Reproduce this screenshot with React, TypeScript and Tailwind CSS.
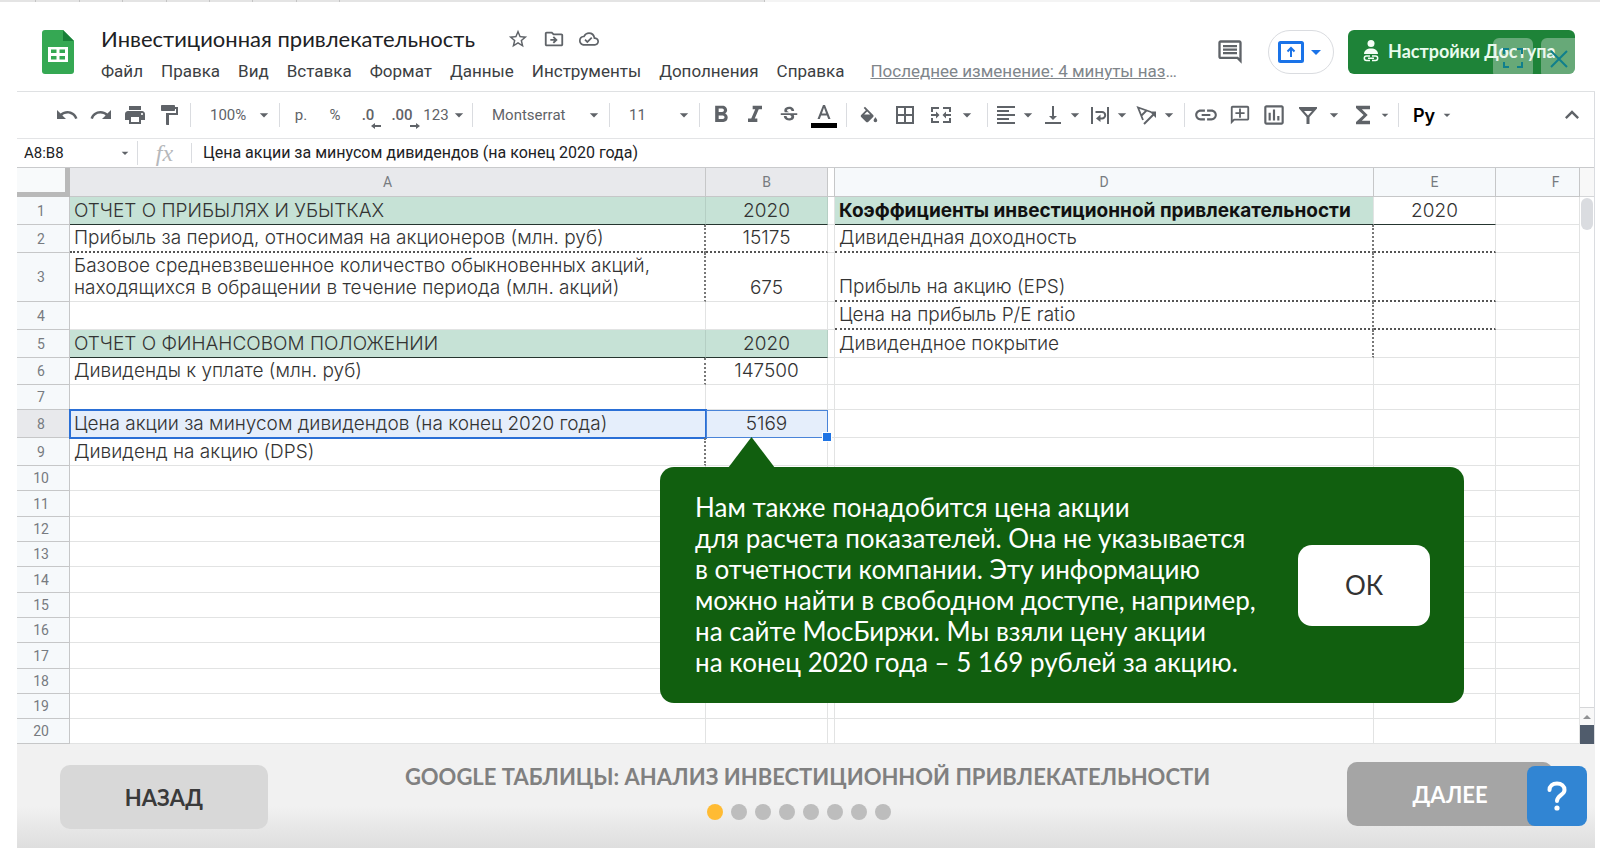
import type { ReactNode } from "react";
import clsx from "clsx";
import {
  MdArrowDropDown,
  MdBorderAll,
  MdFormatAlignLeft,
  MdFormatBold,
  MdFormatItalic,
  MdFunctions,
  MdInsertLink,
  MdKeyboardArrowUp,
  MdOutlineAddComment,
  MdOutlineCloudDone,
  MdOutlineComment,
  MdOutlineDriveFileMove,
  MdOutlineInsertChart,
  MdPrint,
  MdRedo,
  MdStarBorder,
  MdStrikethroughS,
  MdUndo,
  MdVerticalAlignBottom,
} from "react-icons/md";

const TAB_WIDTHS = [36, 44, 43, 44, 43, 43, 44, 43, 425];

const MENU = [
  "Файл",
  "Правка",
  "Вид",
  "Вставка",
  "Формат",
  "Данные",
  "Инструменты",
  "Дополнения",
  "Справка",
];

type CellStyle = "head" | "bold" | "line" | "dot" | "plain";

type Cell = { text?: string; style?: CellStyle; dotRight?: boolean };

type Row = {
  height: string;
  a?: Cell;
  b?: Cell;
  d?: Cell;
  e?: Cell;
};

const ROWS: Row[] = [
  {
    height: "h-[28px]",
    a: { text: "ОТЧЕТ О ПРИБЫЛЯХ И УБЫТКАХ", style: "head" },
    b: { text: "2020", style: "head" },
    d: { text: "Коэффициенты инвестиционной привлекательности", style: "bold" },
    e: { text: "2020", style: "line" },
  },
  {
    height: "h-[28px]",
    a: {
      text: "Прибыль за период, относимая на акционеров (млн. руб)",
      style: "dot",
      dotRight: true,
    },
    b: { text: "15175", style: "dot" },
    d: { text: "Дивидендная доходность", style: "dot", dotRight: true },
    e: { style: "dot" },
  },
  {
    height: "h-[49px]",
    a: {
      text: "Базовое средневзвешенное количество обыкновенных акций, находящихся в обращении в течение периода (млн. акций)",
      dotRight: true,
    },
    b: { text: "675" },
    d: { text: "Прибыль на акцию (EPS)", style: "dot", dotRight: true },
    e: { style: "dot" },
  },
  {
    height: "h-[28px]",
    d: { text: "Цена на прибыль P/E ratio", style: "dot", dotRight: true },
    e: { style: "dot" },
  },
  {
    height: "h-[28px]",
    a: { text: "ОТЧЕТ О ФИНАНСОВОМ ПОЛОЖЕНИИ", style: "head" },
    b: { text: "2020", style: "head" },
    d: { text: "Дивидендное покрытие", dotRight: true },
  },
  {
    height: "h-[27px]",
    a: { text: "Дивиденды к уплате (млн. руб)", dotRight: true },
    b: { text: "147500" },
  },
  { height: "h-[25px]" },
  {
    height: "h-[28px]",
    a: { text: "Цена акции за минусом дивидендов (на конец 2020 года)" },
    b: { text: "5169" },
  },
  {
    height: "h-[28px]",
    a: { text: "Дивиденд на акцию (DPS)", dotRight: true },
  },
  { height: "h-[25px]" },
  { height: "h-[26px]" },
  { height: "h-[25px]" },
  { height: "h-[25px]" },
  { height: "h-[26px]" },
  { height: "h-[25px]" },
  { height: "h-[25px]" },
  { height: "h-[26px]" },
  { height: "h-[25px]" },
  { height: "h-[25px]" },
  { height: "h-[25px]" },
];

const SELECTED_ROW = 8;

function Divider() {
  return <span className="mx-1 h-6 w-px shrink-0 bg-[#dadce0]" />;
}

function ToolButton({
  label,
  className = "w-[34px]",
  children,
}: {
  label: string;
  className?: string;
  children: ReactNode;
}) {
  return (
    <button
      type="button"
      aria-label={label}
      className={clsx(
        "flex h-8 shrink-0 items-center justify-center text-[15px]",
        className,
      )}
    >
      {children}
    </button>
  );
}

function ToolSelect({
  label,
  value,
  className,
}: {
  label: string;
  value: string;
  className: string;
}) {
  return (
    <div className={clsx("relative flex shrink-0 items-center", className)}>
      <select
        aria-label={label}
        className="h-8 w-full appearance-none bg-transparent pl-[15px] text-[15px] outline-none"
        defaultValue={value}
      >
        <option>{value}</option>
      </select>
      <MdArrowDropDown className="pointer-events-none absolute right-[1px] size-5" />
    </div>
  );
}

function Arrow() {
  return <MdArrowDropDown className="size-5 shrink-0" />;
}

function PaintRollerIcon() {
  return (
    <svg viewBox="0 0 24 24" className="size-6" fill="currentColor">
      <path d="M18 4V3c0-.55-.45-1-1-1H5c-.55 0-1 .45-1 1v4c0 .55.45 1 1 1h12c.55 0 1-.45 1-1V6h1v4H9v11c0 .55.45 1 1 1h2V12h9V4h-3z" />
    </svg>
  );
}

function DecimalIcon({ text, back }: { text: string; back?: boolean }) {
  return (
    <span className="relative font-medium">
      {text}
      <svg
        viewBox="0 0 10 6"
        className="absolute -right-[7px] -bottom-[3px] h-[6px] w-[10px]"
        fill="currentColor"
      >
        {back ? (
          <path d="M4 0v2h6v2H4v2L0 3z" />
        ) : (
          <path d="M6 0v2H0v2h6v2l4-3z" />
        )}
      </svg>
    </span>
  );
}

function BucketIcon() {
  return (
    <svg viewBox="0 -3 24 24" className="size-[22px]" fill="currentColor">
      <path d="M16.560 8.940 7.620 0 6.210 1.410l2.380 2.380-5.150 5.150a1.490 1.490 0 0 0 0 2.120l5.500 5.500c.29.29.68.44 1.060.44s.77-.15 1.060-.44l5.500-5.500c.59-.58.59-1.530 0-2.120zM6.700 8.500 10 5.210l3.300 3.290zM19 11.500s-2 2.170-2 3.500a2 2 0 0 0 4 0c0-1.330-2-3.500-2-3.500z" />
    </svg>
  );
}

function MergeIcon() {
  return (
    <svg viewBox="0 0 24 24" className="size-6" fill="currentColor">
      <path d="M2 4h8v2H4v3H2zM14 4h8v5h-2V6h-6zM2 15h2v3h6v2H2zM20 15h2v5h-8v-2h6zM2 11h5V8.500L10.500 12 7 15.500V13H2zM22 11h-5V8.500L13.500 12l3.500 3.500V13h5z" />
    </svg>
  );
}

function WrapIcon() {
  return (
    <svg
      viewBox="0 0 24 24"
      className="size-6"
      fill="none"
      stroke="currentColor"
      strokeWidth="2"
    >
      <path d="M4 4v17M20 4v17M7.500 9H14a3.200 3.200 0 0 1 0 6.400h-2" />
      <path d="M12.500 11.500v7.500L8 15.400z" fill="currentColor" stroke="none" />
    </svg>
  );
}

function RotateIcon() {
  return (
    <svg
      viewBox="0 0 24 24"
      className="size-6"
      fill="none"
      stroke="currentColor"
      strokeWidth="2"
    >
      <path d="M8 17 3 4.500 16 9M6 13l6-6" strokeWidth="1.800" />
      <path d="M9 21 19 11" />
      <path d="M21 8.500v6.500L14.500 8.500z" fill="currentColor" stroke="none" />
    </svg>
  );
}

function FilterIcon() {
  return (
    <svg viewBox="0 0 24 24" className="size-6" fill="currentColor">
      <path
        fillRule="evenodd"
        d="M3 4h18v1.500L13.500 14v7h-3v-7L3 5.500zM8 8l4 4.500L16 8z"
      />
    </svg>
  );
}

function SheetsLogo() {
  return (
    <svg viewBox="0 0 32 44" className="h-11 w-8 shrink-0">
      <path
        d="M3 0h18l11 11v30a3 3 0 0 1-3 3H3a3 3 0 0 1-3-3V3a3 3 0 0 1 3-3z"
        fill="#35a853"
      />
      <path d="M21 0l11 11H21z" fill="#188038" />
      <path
        fillRule="evenodd"
        fill="#fff"
        d="M6 17h20v15H6zM9 19.500v3.500h5.500v-3.500zM17.500 19.500v3.500H23v-3.500zM9 26v3.500h5.500V26zM17.500 26v3.500H23V26z"
      />
    </svg>
  );
}

function SharePersonIcon() {
  return (
    <svg viewBox="0 0 18 22" className="h-[22px] w-[18px]" fill="#f4fff6">
      <circle cx="9" cy="3.500" r="3.500" />
      <path d="M2 14c0-3.500 3-5.500 7-5.500s7 2 7 5.500z" />
      <path
        d="M8 16H4.500a2.200 2.200 0 0 0 0 4.400H8M10 16h3.500a2.200 2.200 0 0 1 0 4.400H10M6 18.200h6"
        fill="none"
        stroke="#f4fff6"
        strokeWidth="1.500"
      />
    </svg>
  );
}

function Header() {
  return (
    <header className="flex h-[90px] shrink-0 border-b border-[#dfe1e3] pl-[25px]">
      <div className="flex pt-7">
        <SheetsLogo />
      </div>
      <div className="ml-[27px] flex min-w-0 flex-1 flex-col pt-[23px]">
        <div className="flex items-center text-[#5f6368]">
          <h1 className="font-[Lato,sans-serif] text-[22px] leading-7 whitespace-nowrap text-[#202124]">
            Инвестиционная привлекательность
          </h1>
          <div className="ml-8 flex items-center gap-[14px]">
            <button type="button" aria-label="Пометить">
              <MdStarBorder className="size-[22px]" />
            </button>
            <button type="button" aria-label="Переместить">
              <MdOutlineDriveFileMove className="size-[22px]" />
            </button>
            <button type="button" aria-label="Статус документа">
              <MdOutlineCloudDone className="size-5" />
            </button>
          </div>
        </div>
        <nav className="mt-[6px] flex items-center gap-[18px] text-[17px] leading-6 whitespace-nowrap text-[#3c4043]">
          {MENU.map((item) => (
            <button key={item} type="button">
              {item}
            </button>
          ))}
          <a href="#history" className="ml-2 text-[#80868b]">
            <span className="underline">Последнее изменение: 4 минуты наз</span>…
          </a>
        </nav>
      </div>
      <div className="flex items-start pt-7 pr-5">
        <button
          type="button"
          aria-label="Комментарии"
          className="mt-2 text-[#5f6368]"
        >
          <MdOutlineComment className="size-7" />
        </button>
        <button
          type="button"
          aria-label="Презентация"
          className="ml-6 flex h-11 w-[66px] items-center justify-center rounded-full border border-[#dadce0] pl-1 text-[#1a73e8]"
        >
          <svg viewBox="0 0 26 22" className="h-[22px] w-[26px] shrink-0">
            <rect
              x="1.500"
              y="1.500"
              width="23"
              height="19"
              rx="1"
              fill="none"
              stroke="currentColor"
              strokeWidth="3"
            />
            <path
              d="M13 16V8M9.500 10.500 13 7l3.500 3.500"
              fill="none"
              stroke="currentColor"
              strokeWidth="2"
            />
          </svg>
          <MdArrowDropDown className="size-6" />
        </button>
        <div className="relative ml-[14px] h-11 overflow-hidden rounded-md">
          <button
            type="button"
            className="flex h-11 w-[227px] items-center gap-2 bg-[#1e8338] pb-[2px] pl-[14px] font-[Lato,sans-serif] text-[18px] font-bold whitespace-nowrap text-[#e9fbee]"
          >
            <SharePersonIcon />
            Настройки Доступа
          </button>
          <button
            type="button"
            aria-label="На весь экран"
            className="absolute top-2 left-[145px] flex h-10 w-10 justify-center rounded-md bg-[#f1f1f1]/35 pt-[10px] text-[#107f8c]"
          >
            <svg
              viewBox="0 0 20 20"
              className="size-5"
              fill="none"
              stroke="currentColor"
              strokeWidth="2"
            >
              <path d="M1 6V1h5M14 1h5v5M19 14v5h-5M6 19H1v-5" />
            </svg>
          </button>
          <button
            type="button"
            aria-label="Закрыть"
            className="absolute top-2 left-[193px] flex h-10 w-10 rounded-md bg-[#f1f1f1]/35 pt-3 pl-[9px] text-[#107f8c]"
          >
            <svg
              viewBox="0 0 18 18"
              className="size-[18px]"
              fill="none"
              stroke="currentColor"
              strokeWidth="2"
            >
              <path d="M1 1l16 16M17 1 1 17" />
            </svg>
          </button>
        </div>
      </div>
    </header>
  );
}

function Toolbar() {
  return (
    <div className="flex h-[47px] shrink-0 items-center border-b border-[#e3e4e6] pl-[33px] text-[#5f6368]">
      <ToolButton label="Отменить">
        <MdUndo className="size-6" />
      </ToolButton>
      <ToolButton label="Повторить">
        <MdRedo className="size-6" />
      </ToolButton>
      <ToolButton label="Печать">
        <MdPrint className="size-6" />
      </ToolButton>
      <ToolButton label="Копировать форматирование">
        <PaintRollerIcon />
      </ToolButton>
      <Divider />
      <ToolSelect label="Масштаб" value="100%" className="w-20" />
      <Divider />
      <ToolButton label="Денежный формат">р.</ToolButton>
      <ToolButton label="Процентный формат">%</ToolButton>
      <ToolButton label="Уменьшить число знаков" className="w-8">
        <DecimalIcon text=".0" back />
      </ToolButton>
      <ToolButton label="Увеличить число знаков" className="w-9">
        <DecimalIcon text=".00" />
      </ToolButton>
      <ToolButton label="Другие форматы" className="w-12 pl-1">
        123
        <Arrow />
      </ToolButton>
      <Divider />
      <ToolSelect label="Шрифт" value="Montserrat" className="w-32" />
      <Divider />
      <ToolSelect label="Размер шрифта" value="11" className="w-[81px]" />
      <Divider />
      <ToolButton label="Полужирный">
        <MdFormatBold className="size-7" />
      </ToolButton>
      <ToolButton label="Курсив">
        <MdFormatItalic className="size-7" />
      </ToolButton>
      <ToolButton label="Зачеркнутый">
        <MdStrikethroughS className="size-[22px]" />
      </ToolButton>
      <ToolButton label="Цвет текста" className="w-9">
        <svg viewBox="0 0 26 28" className="h-7 w-[26px]">
          <path
            d="M12 4h2l5.500 14h-2.300l-1.300-3.500h-5.800L8.800 18H6.500zM10.900 12.500h4.200L13 6.700z"
            fill="currentColor"
            fillRule="evenodd"
          />
          <path d="M0 22h26v5H0z" fill="#000" />
        </svg>
      </ToolButton>
      <Divider />
      <ToolButton label="Цвет заливки" className="w-9">
        <BucketIcon />
      </ToolButton>
      <ToolButton label="Границы" className="w-9">
        <MdBorderAll className="size-6" />
      </ToolButton>
      <ToolButton label="Объединить ячейки" className="w-[60px] gap-1">
        <MergeIcon />
        <Arrow />
      </ToolButton>
      <Divider />
      <ToolButton label="Выравнивание по горизонтали" className="w-[47px]">
        <MdFormatAlignLeft className="size-6" />
        <Arrow />
      </ToolButton>
      <ToolButton label="Выравнивание по вертикали" className="w-[47px]">
        <MdVerticalAlignBottom className="size-6" />
        <Arrow />
      </ToolButton>
      <ToolButton label="Перенос текста" className="w-[47px]">
        <WrapIcon />
        <Arrow />
      </ToolButton>
      <ToolButton label="Поворот текста" className="w-[47px]">
        <RotateIcon />
        <Arrow />
      </ToolButton>
      <Divider />
      <ToolButton label="Вставить ссылку">
        <MdInsertLink className="size-[26px]" />
      </ToolButton>
      <ToolButton label="Вставить комментарий">
        <MdOutlineAddComment className="size-[22px] -scale-x-100" />
      </ToolButton>
      <ToolButton label="Вставить диаграмму">
        <MdOutlineInsertChart className="size-[26px]" />
      </ToolButton>
      <ToolButton label="Фильтр" className="w-[57px] gap-1">
        <FilterIcon />
        <Arrow />
      </ToolButton>
      <ToolButton label="Функции" className="w-[46px]">
        <MdFunctions className="size-7" />
        <MdArrowDropDown className="size-4" />
      </ToolButton>
      <Divider />
      <button
        type="button"
        className="flex h-8 items-center gap-1 pl-[10px] font-[Inter,sans-serif] text-[18px] font-semibold text-black"
      >
        Ру
        <MdArrowDropDown className="size-4 text-[#5f6368]" />
      </button>
      <button
        type="button"
        aria-label="Скрыть меню"
        className="mr-2 ml-auto flex"
      >
        <MdKeyboardArrowUp className="size-7" />
      </button>
    </div>
  );
}

function FormulaBar() {
  return (
    <div className="flex h-[29px] shrink-0 items-center border-b border-[#c9cacc] text-[#202124]">
      <div className="relative flex w-[121px] items-center border-r border-[#dadce0]">
        <input
          aria-label="Диапазон"
          defaultValue="A8:B8"
          className="h-6 w-full pl-[7px] text-[15px] outline-none"
        />
        <MdArrowDropDown className="absolute right-1 size-4 text-[#5f6368]" />
      </div>
      <label
        htmlFor="formula"
        className="flex h-5 w-[54px] items-center justify-center border-r border-[#dadce0] font-['Liberation_Serif',serif] text-[24px] leading-5 text-[#b6b8bb] italic"
      >
        fx
      </label>
      <input
        id="formula"
        defaultValue="Цена акции за минусом дивидендов (на конец 2020 года)"
        className="h-6 min-w-0 flex-1 pl-[11px] text-[16px] outline-none"
      />
    </div>
  );
}

function Callout() {
  return (
    <div className="absolute top-full left-[-46px] z-10 mt-[30px] flex w-[804px] items-center justify-between rounded-[14px] bg-[#115f0f] py-[25px] pr-[34px] pl-[35px] text-left font-[Lato,sans-serif] text-[26px] leading-[31px] font-normal text-white">
      <svg
        viewBox="0 0 47 31"
        className="absolute -top-[30px] left-[68px] h-[31px] w-[47px]"
      >
        <path d="M23.500 0 47 31H0z" fill="#115f0f" />
      </svg>
      <p className="whitespace-nowrap">
        Нам также понадобится цена акции
        <br />
        для расчета показателей. Она не указывается
        <br />
        в отчетности компании. Эту информацию
        <br />
        можно найти в свободном доступе, например,
        <br />
        на сайте МосБиржи. Мы взяли цену акции
        <br />
        на конец 2020 года – 5 169 рублей за акцию.
      </p>
      <button
        type="button"
        className="h-[81px] w-[132px] rounded-[14px] bg-white text-[#333]"
      >
        ОК
      </button>
    </div>
  );
}

function SheetCell({
  cell = {},
  center,
  selected,
  last,
  children,
}: {
  cell?: Cell;
  center?: boolean;
  selected?: "main" | "range";
  last?: boolean;
  children?: ReactNode;
}) {
  const style = cell.style ?? "plain";

  return (
    <td
      className={clsx(
        "relative border-r border-b pb-[2px] align-bottom",
        center ? "text-center" : "pr-5 pl-1",
        (style === "head" || style === "bold") && "bg-[#c6e2d6]",
        (style === "head" || style === "bold" || style === "line") &&
          "border-b-[#25352f]",
        style === "bold" && "font-bold text-[#111]",
        style === "dot" && "border-b-2 border-b-[#555] [border-bottom-style:dotted]",
        style === "plain" && "border-b-[#e2e3e3]",
        cell.dotRight
          ? "border-r-2 border-r-[#777] [border-right-style:dotted]"
          : style === "head"
            ? "border-r-[#b5cfc4]"
            : "border-r-[#e2e3e3]",
        selected && "bg-[#e5eefb]",
        selected === "main" && "outline-2 -outline-offset-1 outline-[#2a6fd6]",
        selected === "range" && "outline -outline-offset-1 outline-[#4a84d8]",
        last && "border-r-[#d5d6d8]",
      )}
    >
      {cell.text}
      {children}
    </td>
  );
}

function Sheet() {
  return (
    <div className="flex shrink-0">
      <table className="w-full min-w-0 flex-1 table-fixed border-separate border-spacing-0">
        <colgroup>
          <col className="w-[53px]" />
          <col className="w-[636px]" />
          <col className="w-[122px]" />
          <col className="w-[7px]" />
          <col className="w-[539px]" />
          <col className="w-[122px]" />
          <col />
        </colgroup>
        <thead className="text-[14px] text-[#777b80]">
          <tr className="h-[29px] [&>th]:border-r [&>th]:border-b [&>th]:border-[#c6c7c8] [&>th]:p-0 [&>th]:font-normal">
            <th
              aria-label="Выделить все"
              className="!border-r-[5px] !border-b-[5px] !border-[#b9b9b9] bg-[#f8fafb]"
            />
            <th className="bg-[#e8e9ec]">A</th>
            <th className="bg-[#e8e9ec]">B</th>
            <th aria-label="C" className="bg-white" />
            <th className="bg-[#f6f9fb]">D</th>
            <th className="bg-[#f6f9fb]">E</th>
            <th className="bg-[#f6f9fb] !pl-9">F</th>
          </tr>
        </thead>
        <tbody className="font-[Inter,sans-serif] text-[19px] leading-[22px] font-light text-[#333]">
          {ROWS.map((row, idx) => {
            const num = idx + 1;
            const selected = num === SELECTED_ROW;

            return (
              <tr key={num} className={row.height}>
                <th
                  className={clsx(
                    "border-r border-b border-[#c6c7c8] p-0 pr-1 font-[Roboto,sans-serif] text-[14px] leading-4 font-normal text-[#777b80]",
                    selected ? "bg-[#e8e9ec]" : "bg-[#f6f9fb]",
                  )}
                >
                  {num}
                </th>
                <SheetCell cell={row.a} selected={selected ? "main" : undefined} />
                <SheetCell
                  cell={row.b}
                  center
                  selected={selected ? "range" : undefined}
                >
                  {selected && (
                    <>
                      <span className="absolute -right-1 -bottom-1 z-10 size-2 bg-[#1f74e4] outline outline-white" />
                      <Callout />
                    </>
                  )}
                </SheetCell>
                <SheetCell />
                <SheetCell cell={row.d} />
                <SheetCell cell={row.e} center />
                <SheetCell last />
              </tr>
            );
          })}
        </tbody>
      </table>
      <div className="flex w-[14px] shrink-0 flex-col">
        <div className="h-[29px] border-b border-[#d5d6d8] bg-[#f8f8f8]" />
        <div className="mx-px mt-px h-8 rounded-full bg-[#dadce0]" />
        <div className="mt-auto flex h-[18px] items-center justify-center border-t border-[#d5d6d8] bg-[#f8f8f8]">
          <svg viewBox="0 0 8 4" className="h-1 w-2">
            <path d="M4 0l4 4H0z" fill="#909294" />
          </svg>
        </div>
        <div className="h-[19px] bg-[#505c6c]" />
      </div>
    </div>
  );
}

function Footer() {
  return (
    <footer className="flex flex-1 items-start bg-linear-to-b from-[#f1f1f1] from-60% to-[#dedede] pr-2 pl-[43px] font-[Lato,sans-serif] text-[22px] font-bold">
      <button
        type="button"
        className="mt-[21px] h-16 w-[208px] rounded-[10px] bg-[#d8d8d8] text-[#3a3a3a]"
      >
        НАЗАД
      </button>
      <div className="flex flex-1 flex-col items-center pt-[19px]">
        <h2 className="leading-7 whitespace-nowrap text-[#808080]">
          GOOGLE ТАБЛИЦЫ: АНАЛИЗ ИНВЕСТИЦИОННОЙ ПРИВЛЕКАТЕЛЬНОСТИ
        </h2>
        <div className="mt-[13px] mr-[18px] flex gap-2">
          {[1, 2, 3, 4, 5, 6, 7, 8].map((step) => (
            <span
              key={step}
              className={clsx(
                "size-4 rounded-full",
                step === 1 ? "bg-[#ffbb33]" : "bg-[#bdbdbd]",
              )}
            />
          ))}
        </div>
      </div>
      <div className="relative pt-[18px] pr-[34px]">
        <button
          type="button"
          className="h-16 w-[206px] rounded-[10px] bg-[#a5a5a5] text-white"
        >
          ДАЛЕЕ
        </button>
        <button
          type="button"
          aria-label="Помощь"
          className="absolute top-[22px] right-0 flex size-[60px] items-center justify-center rounded-lg bg-[#3185d3] text-white"
        >
          <svg
            viewBox="0 0 20 30"
            className="h-[30px] w-5"
            fill="none"
            stroke="currentColor"
            strokeWidth="4"
            strokeLinecap="round"
          >
            <path d="M2.500 9C2.500 5 5.500 2.500 10 2.500S17.500 5 17.500 9c0 5-7.500 5.500-7.500 11" />
            <circle cx="10" cy="27" r="2.600" fill="currentColor" stroke="none" />
          </svg>
        </button>
      </div>
    </footer>
  );
}

export default function App() {
  return (
    <div className="flex min-h-screen flex-col overflow-hidden bg-white font-[Roboto,sans-serif]">
      <div className="flex h-[2px] shrink-0 bg-[#e4e4e4]">
        {TAB_WIDTHS.map((width, idx) => (
          <span
            key={idx}
            className="border-r border-[#c4c4c4]"
            style={{ width }}
          />
        ))}
        <span className="w-[425px] bg-[#f4f4f4]" />
      </div>
      <main className="mr-[5px] ml-[17px] flex flex-1 flex-col">
        <Header />
        <div className="flex flex-col border-r border-[#dadce0]">
          <Toolbar />
          <FormulaBar />
          <Sheet />
        </div>
        <Footer />
      </main>
    </div>
  );
}
